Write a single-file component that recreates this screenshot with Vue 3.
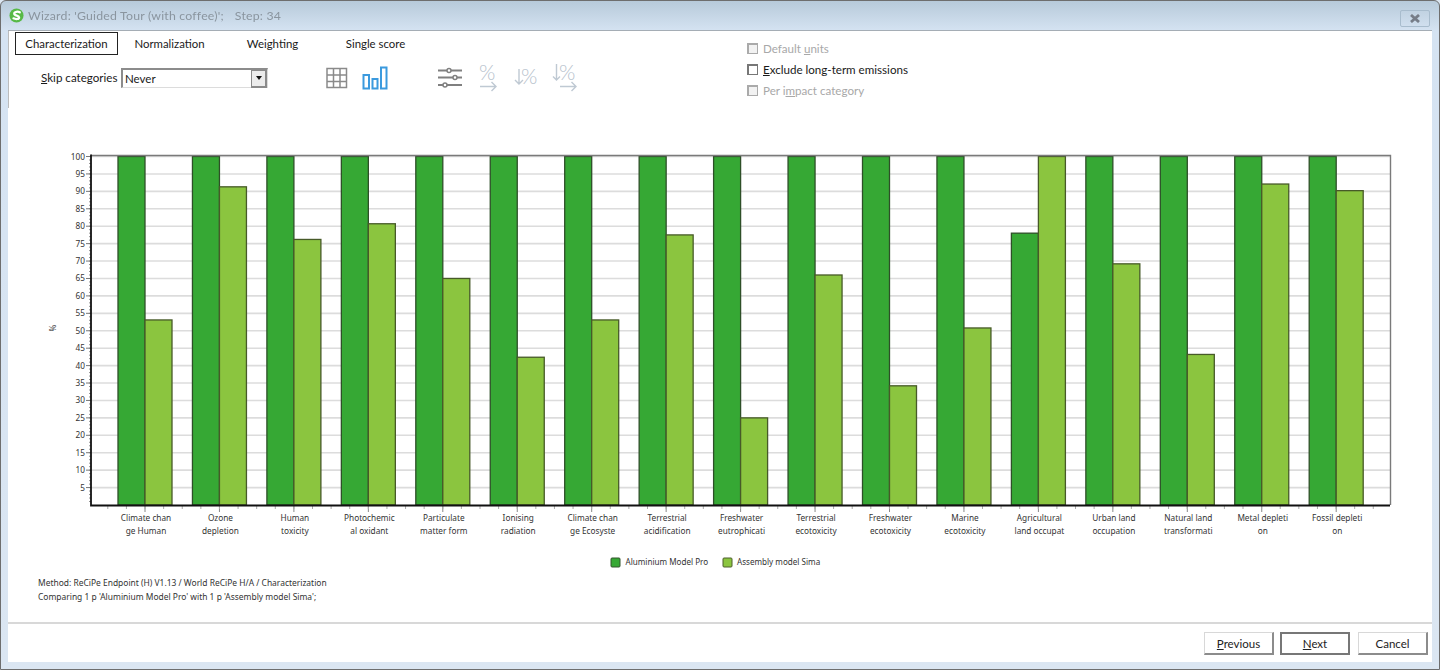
<script setup>
const plot = { left: 91, right: 1390, top: 155, bottom: 505 }
const unit = 3.485
const y = (v) => plot.bottom - v * unit
const categories = [
  ['Climate chan', 'ge Human', 53.1],
  ['Ozone', 'depletion', 91.3],
  ['Human', 'toxicity', 76.2],
  ['Photochemic', 'al oxidant', 80.7],
  ['Particulate', 'matter form', 65],
  ['Ionising', 'radiation', 42.4],
  ['Climate chan', 'ge Ecosyste', 53.1],
  ['Terrestrial', 'acidification', 77.5],
  ['Freshwater', 'eutrophicati', 25],
  ['Terrestrial', 'ecotoxicity', 66],
  ['Freshwater', 'ecotoxicity', 34.2],
  ['Marine', 'ecotoxicity', 50.8],
  ['Agricultural', 'land occupat', 100, 78],
  ['Urban land', 'occupation', 69.2],
  ['Natural land', 'transformati', 43.2],
  ['Metal depleti', 'on', 92.1],
  ['Fossil depleti', 'on', 90.2]
].map(([a, b, second, first], i) => ({ a, b, second, first: first ?? 100, x: 145 + i * 74.45 }))
const gridValues = Array.from({ length: 20 }, (_, i) => (i + 1) * 5)
const minorY = Array.from({ length: 100 }, (_, i) => i + 1)
const minorX = Array.from({ length: 69 }, (_, i) => 107.8 + i * 18.61)
const tabs = ['Characterization', 'Normalization', 'Weighting', 'Single score']
</script>

<template>
  <div class="window">
    <header class="titlebar">
      <svg class="logo" width="15" height="15" viewBox="0 0 16 16">
        <circle cx="8" cy="8" r="7.5" fill="#57b947" />
        <path d="M11.5 4.6C9.6 3.4 5.6 3.8 5.6 6c0 2.6 5.2 1.6 5.2 4 0 2-3.6 2.2-6 1" fill="none" stroke="#fff" stroke-width="2.4" stroke-linecap="round" />
      </svg>
      <span class="title">Wizard: 'Guided Tour (with coffee)';</span>
      <span class="step">Step: 34</span>
      <button class="close" aria-label="Close">
        <svg width="12" height="9" viewBox="0 0 12 9"><path d="M2 1l8 7M10 1l-8 7" stroke="#767d88" stroke-width="2.8" /></svg>
      </button>
    </header>

    <main class="content">
      <section class="toolbar">
        <div class="toolbar-left">
          <nav class="tabs">
            <span v-for="(t, i) in tabs" :key="t" class="tab" :class="{ active: i === 0 }">{{ t }}</span>
          </nav>
          <div class="controls">
            <label class="skip"><u>S</u>kip categories</label>
            <div class="select">
              <span class="select-value">Never</span>
              <span class="select-btn"><i></i></span>
            </div>
            <svg class="ic-grid" width="22" height="22" viewBox="0 0 22 22" fill="none" stroke="#8a8a8a" stroke-width="1.5">
              <rect x="1" y="1.5" width="19.5" height="19" />
              <path d="M7.5 1.5v19M14 1.5v19M1 8h19.5M1 14.5h19.5" />
            </svg>
            <svg class="ic-bars" width="26" height="24" viewBox="0 0 26 24" fill="none" stroke="#3b9ade" stroke-width="2">
              <rect x="1.5" y="9" width="5.5" height="13.5" />
              <rect x="10.5" y="13" width="5" height="9.5" />
              <rect x="19" y="1.5" width="5.5" height="21" />
            </svg>
            <svg class="ic-sliders" width="25" height="22" viewBox="0 0 25 22" stroke="#808080" fill="#fff">
              <path d="M0 3.500h24M0 10.500h24M0 18h24" stroke-width="2" />
              <circle cx="11" cy="3.500" r="2" stroke-width="1.500" />
              <circle cx="17" cy="10.500" r="2" stroke-width="1.500" />
              <circle cx="7" cy="18" r="2" stroke-width="1.500" />
            </svg>
            <svg class="ic-pct p1" width="20" height="28" viewBox="0 0 20 28">
              <text x="0" y="16" class="pct">%</text>
              <path d="M1 22.500h16M12.500 18l4.500 4.500-4.500 4.500" class="pct-line" />
            </svg>
            <svg class="ic-pct p2" width="26" height="24" viewBox="0 0 26 24">
              <text x="7" y="18" class="pct">%</text>
              <path d="M5 3v15M1 14l4 4 4-4" class="pct-line" />
            </svg>
            <svg class="ic-pct p3" width="26" height="30" viewBox="0 0 26 30">
              <text x="7" y="17" class="pct">%</text>
              <path d="M4.500 1v16M1 13.500l3.500 3.500 3.500-3.500M8 23.500h16M19.500 19l4.500 4.500-4.500 4.500" class="pct-line" />
            </svg>
          </div>
        </div>
        <div class="checks">
          <div class="check disabled"><i></i><span>Default <u>u</u>nits</span></div>
          <div class="check"><i></i><span><u>E</u>xclude long-term emissions</span></div>
          <div class="check disabled"><i></i><span>Per i<u>m</u>pact category</span></div>
        </div>
      </section>

      <section class="chart-area">
        <svg class="chart" width="1424" height="462" viewBox="8 108 1424 462">
          <line v-for="v in gridValues" :key="'g' + v" :x1="plot.left" :x2="plot.right" :y1="y(v)" :y2="y(v)" stroke="#dcdcdc" stroke-width="1.6" />
          <line v-for="v in minorY" :key="'m' + v" x1="89" x2="91" :y1="y(v)" :y2="y(v)" stroke="#777" stroke-width="0.8" />
          <g v-for="v in gridValues" :key="'l' + v">
            <line x1="86" x2="91" :y1="y(v)" :y2="y(v)" stroke="#777" stroke-width="1" />
            <text x="85" :y="y(v) + 3" text-anchor="end" class="small">{{ v }}</text>
          </g>
          <g v-for="c in categories" :key="c.x">
            <rect :x="c.x - 27" :y="y(c.first)" width="27" :height="plot.bottom - y(c.first)" fill="#36a834" stroke="#2e4f28" stroke-width="1.300" />
            <rect :x="c.x" :y="y(c.second)" width="27" :height="plot.bottom - y(c.second)" fill="#8bc53f" stroke="#475a28" stroke-width="1.300" />
            <line :x1="c.x" :x2="c.x" y1="506" y2="512" stroke="#888" />
            <text :x="c.x + 1" y="521" text-anchor="middle" class="small">{{ c.a }}</text>
            <text :x="c.x + 1" y="534" text-anchor="middle" class="small">{{ c.b }}</text>
          </g>
          <line v-for="(x, i) in minorX" :key="'t' + i" :x1="x" :x2="x" y1="506" y2="509" stroke="#aaa" />
          <path d="M91 155.500H1390.500V505" fill="none" stroke="#7a7a7a" stroke-width="1.400" />
          <path d="M91 154.500V505.500H1390" fill="none" stroke="#111" stroke-width="1.800" />
          <text class="small" transform="translate(56 328) rotate(-90)" text-anchor="middle">%</text>
          <rect x="611" y="558" width="9" height="9" rx="1" fill="#36a834" stroke="#33542c" />
          <text x="625.500" y="565" class="small legend">Aluminium Model Pro</text>
          <rect x="723" y="558" width="9" height="9" rx="1" fill="#8bc53f" stroke="#4c5f2c" />
          <text x="737" y="565" class="small legend">Assembly model Sima</text>
        </svg>
        <div class="notes">
          <div>Method: ReCiPe Endpoint (H) V1.13 / World ReCiPe H/A / Characterization</div>
          <div>Comparing 1 p 'Aluminium Model Pro' with 1 p 'Assembly model Sima';</div>
        </div>
      </section>

      <footer class="footer">
        <button class="btn"><u>P</u>revious</button>
        <button class="btn default"><u>N</u>ext</button>
        <button class="btn">Cancel</button>
      </footer>
    </main>
  </div>
</template>

<style>
html, body { margin: 0; background: #dbe6f2; overflow: hidden; }
</style>

<style scoped>
.window {
  box-sizing: border-box;
  width: 1440px;
  height: 670px;
  display: flex;
  flex-direction: column;
  padding: 0 7px 7px 7px;
  border: 1px solid #6e6e6e;
  border-radius: 6px 6px 0 0;
  background: linear-gradient(#b7cada 0, #d5e3f2 30px, #dbe6f2 100%);
  font-family: Lato, "Noto Sans", sans-serif;
  color: #1a1a1a;
  filter: blur(0.35px);
}
.titlebar {
  position: relative;
  height: 29px;
  flex: none;
  display: flex;
  align-items: center;
  font-size: 12.3px;
  letter-spacing: 0.2px;
  color: #8a959f;
}
.logo { margin: 0 4px 0 1px; }
.title { margin-right: 11px; white-space: nowrap; }
.close {
  position: absolute;
  right: 2px;
  top: 9px;
  width: 30px;
  height: 17px;
  padding: 0;
  display: flex;
  align-items: center;
  justify-content: center;
  background: transparent;
  border: 1px solid #a8bccd;
  border-radius: 2px;
}
.content {
  flex: 1;
  min-height: 0;
  display: flex;
  flex-direction: column;
  background: #fff;
  border-top: 1px solid #a5adb5;
}
.toolbar {
  height: 77px;
  flex: none;
  display: flex;
  border-left: 1px solid #bcbcbc;
  box-sizing: border-box;
}
.toolbar-left { width: 738px; flex: none; }
.tabs { display: flex; padding: 1px 0 0 6px; }
.tab {
  box-sizing: border-box;
  width: 103px;
  height: 23px;
  display: flex;
  align-items: center;
  justify-content: center;
  font-size: 11.4px;
}
.tab.active { border: 1px solid #222; }
.controls { display: flex; align-items: center; height: 24px; margin-top: 11px; padding-left: 32px; }
.skip { font-size: 11.6px; width: 80px; white-space: nowrap; margin-top: -2px; }
.select {
  box-sizing: border-box;
  width: 147px;
  height: 20px;
  display: flex;
  align-items: center;
  justify-content: space-between;
  font-size: 11.5px;
  padding-left: 2px;
  border: 1px solid #dcdcdc;
  border-top: 2px solid #8c8c8c;
  border-left: 2px solid #8c8c8c;
}
.select-value { margin-top: -1px; }
.select-btn {
  width: 16px;
  height: 18px;
  background: #ececec;
  border: 1px solid #8a8a8a;
  border-width: 1px 2px 2px 1px;
  box-sizing: border-box;
  display: flex;
  align-items: center;
  justify-content: center;
}
.select-btn i { border: 3.5px solid transparent; border-top: 4px solid #111; border-bottom: 0; }
.ic-grid { margin-left: 58px; }
.ic-bars { margin-left: 14px; }
.ic-sliders { margin-left: 50px; }
.ic-pct { overflow: visible; flex: none; }
.p1 { margin-left: 16px; }
.p2 { margin-left: 15px; }
.p3 { margin-left: 12px; }
.pct { font-size: 21px; font-weight: 300; fill: #b6c1cc; font-family: Lato, sans-serif; }
.pct-line { fill: none; stroke: #bfc9d3; stroke-width: 1.4; }
.checks { display: flex; flex-direction: column; padding-top: 9px; gap: 5px; }
.check { display: flex; align-items: center; height: 16px; font-size: 11.6px; }
.check i {
  box-sizing: border-box;
  width: 11px;
  height: 11px;
  margin-right: 5px;
  border: 1px solid #777;
  border-width: 2px 1px 1px 2px;
  background: #fff;
}
.check.disabled { color: #a8a8a8; }
.check.disabled i { border-color: #aaa; background: #f2f2f2; }
.chart-area { flex: none; }
.chart { display: block; }
.small { font-size: 8.25px; fill: #333; font-family: "Noto Sans", sans-serif; }
.small.legend { font-size: 8.1px; }
.notes { padding: 6px 0 0 30px; font-size: 8.45px; line-height: 14px; color: #333; height: 52px; box-sizing: border-box; font-family: "Noto Sans", sans-serif; }
.footer {
  flex: 1;
  display: flex;
  justify-content: flex-end;
  align-items: flex-start;
  gap: 6px;
  padding: 8px 4px 0 0;
  border-top: 2px solid #d8d8d8;
}
.btn {
  box-sizing: border-box;
  width: 70px;
  height: 23px;
  padding: 0;
  font: 11.5px Lato, "Noto Sans", sans-serif;
  color: #222;
  background: #fff;
  border: 1px solid #d8d8d8;
  border-right: 2px solid #8c8c8c;
  border-bottom: 2px solid #8c8c8c;
}
.btn.default { border: 2px solid #777; margin-right: 2px; }
</style>
